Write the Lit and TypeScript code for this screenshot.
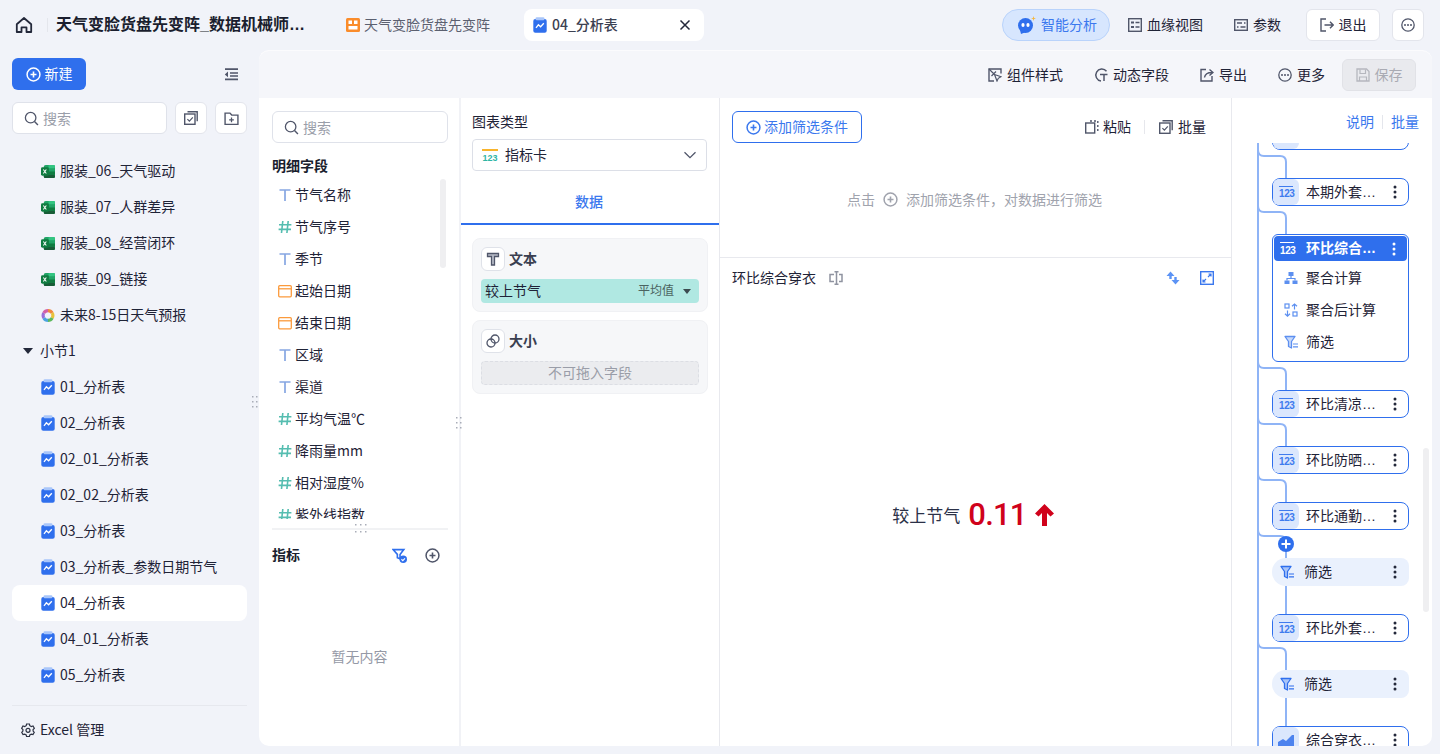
import { LitElement, html, svg, css } from "lit";
import { customElement } from "lit/decorators.js";

const S = (w: number, h: number, body: any, vb = "0 0 14 14") =>
  html`<svg class="ic" width=${w} height=${h} viewBox=${vb} fill="none">${body}</svg>`;
const ink = "#50566a";
const blue = "#2f6fed";

const excel = () => S(14, 15, svg`
  <rect x="3" y="0.5" width="12" height="14" rx="2" fill="#21a366"/>
  <rect x="8" y="7.500" width="7" height="3.500" fill="#107c41"/><rect x="3" y="11" width="12" height="3.500" rx="1.500" fill="#185c37"/>
  <rect x="8" y="0.5" width="7" height="3.500" rx="1" fill="#33c481"/>
  <rect x="0" y="3" width="8.500" height="9" rx="1.500" fill="#107c41"/>
  <path d="M2.500 5.300l3.200 4.400M5.700 5.300L2.500 9.700" stroke="#fff" stroke-width="1.100"/>`, "0 0 15 15");
const chart = () => S(14, 16, svg`
  <rect x="0.300" y="2" width="13.400" height="13.700" rx="2" fill="#2f6fed"/>
  <rect x="2.500" y="0.300" width="9" height="3" rx="1.300" fill="#a9c6fa"/>
  <path d="M3 10.800l2.400-3 2.200 2 3.200-3.600" stroke="#fff" stroke-width="1.300" fill="none"/>`, "0 0 14 16");
const logo = () => S(14, 15, svg`
  <g fill="none" stroke-width="3.400">
  <path d="M7.500 2.300a5.200 5.200 0 0 1 4.500 2.600" stroke="#f0883e"/>
  <path d="M12 4.900a5.200 5.200 0 0 1 0 5.200" stroke="#e8c23a"/>
  <path d="M12 10.100a5.200 5.200 0 0 1-4.500 2.600" stroke="#5cb85c"/>
  <path d="M7.500 12.700A5.200 5.200 0 0 1 3 10.100" stroke="#4aa3df"/>
  <path d="M3 10.100a5.200 5.200 0 0 1 0-5.200" stroke="#9a6fd8"/>
  <path d="M3 4.900a5.200 5.200 0 0 1 4.500-2.600" stroke="#d25fa8"/></g>`, "0 0 15 15");
const plusC = (c = ink, sz = 15) => S(sz, sz, svg`<circle cx="7" cy="7" r="6" stroke=${c} stroke-width="1.400"/><path d="M7 4.200v5.600M4.200 7h5.600" stroke=${c} stroke-width="1.500"/>`);
const searchI = () => S(15, 15, svg`<circle cx="6.200" cy="6.200" r="4.900" stroke=${ink} stroke-width="1.200"/><path d="M9.800 9.800l3.200 3.200" stroke=${ink} stroke-width="1.300"/>`);
const batch = () => S(14, 14, svg`<rect x="0.700" y="3" width="10.300" height="10.300" stroke=${ink} stroke-width="1.400"/><path d="M3.500 0.800h9.700v9.400" stroke=${ink} stroke-width="1.400"/><path d="M3.400 8.200l2 2 3.400-3.800" stroke=${ink} stroke-width="1.200"/>`);
const folderPlus = () => S(15, 15, svg`<path d="M1 2h4.600l1.600 1.800H13v8.700H1z" stroke=${ink} stroke-width="1.300"/><path d="M7 6v4.400M4.800 8.200h4.400" stroke=${ink} stroke-width="1.200"/>`);
const indent = () => S(14, 14, svg`<path d="M1 2.200h13M6 6h8M6 9h8M1 12.400h13" stroke=${ink} stroke-width="1.700"/><path d="M4 4.600L.8 7.400 4 10.200z" fill=${ink}/>`);
const gear = () => S(14, 14, svg`<path d="M5.600 1h2.800l.4 1.700 1.500.8 1.700-.5 1.300 2.300-1.200 1.200v1.600l1.200 1.200-1.300 2.300-1.700-.5-1.500.8-.4 1.700H5.600l-.4-1.700-1.500-.8-1.700.5L.7 9.300l1.200-1.200V6.500L.7 5.300 2 3l1.700.5 1.500-.8z" stroke="#2d3243" stroke-width="1.200"/><circle cx="7" cy="7.300" r="2" stroke="#2d3243" stroke-width="1.200"/>`);
const T = () => S(14, 14, svg`<path d="M1.500 2h11M7 2v11" stroke="#86a6e2" stroke-width="1.700"/>`);
const H = () => S(14, 14, svg`<path d="M4.800 1l-1.300 12M10.200 1L8.900 13M1 4.800h12.400M.6 9.400H13" stroke="#55bdb0" stroke-width="1.600"/>`);
const Cal = () => S(14, 14, svg`<rect x="0.700" y="1.700" width="12.600" height="11.100" rx="1" stroke="#fb9a3c" stroke-width="1.300"/><path d="M1 4.800h12" stroke="#fb9a3c" stroke-width="1.300"/>`);
const n123 = (light = false) => html`<span class="n123 ${light ? "lt" : ""}"><i></i>123</span>`;
const menu = (c = "#23283a") => html`<svg class="dots" width="4" height="14" viewBox="0 0 4 14"><circle cx="2" cy="2" r="1.500" fill=${c}/><circle cx="2" cy="7" r="1.500" fill=${c}/><circle cx="2" cy="12" r="1.500" fill=${c}/></svg>`;
const filterI = (c = blue) => S(14, 14, svg`<path d="M1 1.500h10L7.500 6.500V13L4.500 11.500V6.500z" stroke=${c} stroke-width="1.300" stroke-linejoin="round" fill=${c} fill-opacity=".35"/><path d="M9 9h5M9 11.800h5" stroke=${c} stroke-width="1.200"/>`);
const grip = () => html`<svg width="6" height="14" viewBox="0 0 6 14"><g fill="#a9adb8"><rect x="0" y="1" width="1.500" height="1.500"/><rect x="0" y="6" width="1.500" height="1.500"/><rect x="0" y="11" width="1.500" height="1.500"/><rect x="4" y="1" width="1.500" height="1.500"/><rect x="4" y="6" width="1.500" height="1.500"/><rect x="4" y="11" width="1.500" height="1.500"/></g></svg>`;
const gripH = () => html`<svg width="14" height="9" viewBox="0 0 14 9"><g fill="#a9adb8"><rect x="1" y="0" width="1.500" height="1.500"/><rect x="6" y="0" width="1.500" height="1.500"/><rect x="11" y="0" width="1.500" height="1.500"/><rect x="1" y="7" width="1.500" height="1.500"/><rect x="6" y="7" width="1.500" height="1.500"/><rect x="11" y="7" width="1.500" height="1.500"/></g></svg>`;
const branch = () => html`<svg class="br" width="32" height="28" viewBox="0 0 32 28" fill="none"><path d="M1 0Q1 6 7 6H23Q29 6 29 12V28" stroke="#8fb4f6" stroke-width="2"/></svg>`;
const more = () => S(14, 14, svg`<circle cx="7" cy="7" r="6.200" stroke="#50566a" stroke-width="1.300"/><circle cx="4" cy="7" r="1" fill="#50566a"/><circle cx="7" cy="7" r="1" fill="#50566a"/><circle cx="10" cy="7" r="1" fill="#50566a"/>`);

const tree: any[] = [
  ["x", "服装_05_"], ["x", "服装_06_天气驱动"], ["x", "服装_07_人群差异"], ["x", "服装_08_经营闭环"], ["x", "服装_09_链接"],
  ["l", "未来8-15日天气预报"], ["s", "小节1"], ["c", "01_分析表"], ["c", "02_分析表"], ["c", "02_01_分析表"], ["c", "02_02_分析表"],
  ["c", "03_分析表"], ["c", "03_分析表_参数日期节气"], ["a", "04_分析表"], ["c", "04_01_分析表"], ["c", "05_分析表"],
];
const fields: any[] = [
  [T, "节气名称"], [H, "节气序号"], [T, "季节"], [Cal, "起始日期"], [Cal, "结束日期"], [T, "区域"], [T, "渠道"],
  [H, "平均气温℃"], [H, "降雨量mm"], [H, "相对湿度%"], [H, "紫外线指数"],
];

@customElement("app-root")
export class AppRoot extends LitElement {
  static styles = css`
    :host { display: block; width: 1440px; height: 754px; overflow: hidden; background: #f1f3f9; color: #1f2337;
      font: 14px/20px "Noto Sans CJK SC", "Liberation Sans", sans-serif; }
    .ic { flex: none; display: block; margin-top: 2px; }
    .tab1, .tab2, .ai, .tl, .btn, .new, .row, .foot, .f, .sel, .tabs, .pill, .off, .add, .ch, .or, .oh, .mh { padding-bottom: 2px; box-sizing: border-box; }
    .home .ic, .sr > .ic, .sq .ic, .box .ic, .wb .ic, .plus .ic, .search .ic, .nd > .ic, .kpi .ic { margin-top: 0; }
    .top { height: 50px; display: flex; align-items: center; padding: 0 16px 0 15px; box-sizing: border-box; }
    .home { margin-right: 14px; display: block; }
    .vsep { width: 1px; height: 14px; background: #e4e6ec; margin-right: 8px; }
    .title { width: 251px; font: 700 16px/20px "Liberation Sans", "Noto Sans CJK SC", sans-serif; white-space: nowrap; overflow: hidden; text-overflow: ellipsis; color: #1a1e2e; }
    .tab1 { margin-left: 39px; display: flex; align-items: center; gap: 4px; color: #5b6070; }
    .tab2 { margin-left: 34px; width: 180px; height: 32px; background: #fff; border-radius: 8px; display: flex; align-items: center; gap: 5px; padding: 0 13px 2px 9px; color: #3c4152; font-weight: 500; }
    .tab2 .x { margin-left: auto; }
    .grow { flex: 1; }
    .ai { width: 108px; height: 32px; border: 1px solid #b9d3fb; background: #d7e6fe; border-radius: 16px; display: flex; align-items: center; gap: 5px; padding-left: 14px; color: #3b78ee; }
    .tl { display: flex; align-items: center; gap: 5px; }
    .tl.a { margin-left: 18px; }
    .tl.b { margin-left: 31px; }
    .btn { height: 32px; background: #fff; border: 1px solid #e3e5ec; border-radius: 6px; display: flex; align-items: center; justify-content: center; gap: 5px; }
    .exit { width: 74px; margin-left: 25px; }
    .mo { width: 32px; margin-left: 12px; }

    .body { display: flex; height: 696px; }
    .side { width: 259px; flex: none; box-sizing: border-box; padding: 8px 12px 0; display: flex; flex-direction: column; }
    .sr { display: flex; align-items: center; justify-content: space-between; padding-right: 9px; }
    .new { width: 74px; height: 32px; background: #2f6fed; border-radius: 6px; color: #fff; display: flex; align-items: center; justify-content: center; gap: 4px; }
    .srow { display: flex; gap: 8px; margin-top: 12px; }
    .search { height: 32px; box-sizing: border-box; flex: 1; border: 1px solid #dfe2ea; border-radius: 6px; background: #fff; display: flex; align-items: center; gap: 4px; padding-left: 11px; color: #9a9ea9; }
    .sq { width: 32px; height: 32px; box-sizing: border-box; border: 1px solid #e3e5ec; background: #fff; border-radius: 6px; display: flex; align-items: center; justify-content: center; flex: none; }
    .tree { height: 551px; margin-top: 8px; overflow: hidden; }
    .row { height: 36px; display: flex; align-items: center; gap: 5px; padding-left: 29px; border-radius: 8px; white-space: nowrap; color: #1f2337; }
    .row:first-child { margin-top: -25px; }
    .row.sec { padding-left: 11px; gap: 7px; }
    .row.on { background: #fff; }
    .tri { width: 0; height: 0; margin-top: 2px; border: 5px solid transparent; border-top: 6px solid #23283a; border-bottom: 0; }
    .foot { margin-top: 12px; border-top: 1px solid #e6e8ee; padding: 13px 0 2px 9px; display: flex; align-items: center; gap: 5px; }
    .vgrip { position: absolute; left: 252px; top: 343px; }
    .side-wrap { position: relative; display: flex; }

    .card { width: 1173px; height: 696px; flex: none; background: #fff; border-top: 1px solid #fbfbfd; border-radius: 10px; overflow: hidden; box-sizing: border-box; display: flex; flex-direction: column; }
    .bar { height: 47px; flex: none; box-sizing: border-box; padding: 1px 16px 0 0; background: #f5f6fa; display: flex; align-items: center; justify-content: flex-end; gap: 31px; }
    .save { width: 74px; margin-left: -14px; background: #e9eaee; border-color: #e1e2e7; color: #a9abb3; }
    .panels { flex: 1; display: flex; min-height: 0; }
    .fields { width: 202px; flex: none; box-sizing: border-box; border-right: 2px solid #f1f2f6; padding: 13px 11px 0 13px; position: relative; display: flex; flex-direction: column; }
    .fields .search { flex: none; }
    .h { font-weight: 700; color: #1a1e2e; }
    .mf { margin-top: 12px; height: 20px; margin-bottom: 1px; }
    .flist { height: 340px; margin-top: 3px; overflow: hidden; margin-left: -13px; }
    .f { height: 32px; display: flex; align-items: center; gap: 3px; padding-left: 19px; white-space: nowrap; }
    .thumb { position: absolute; width: 6px; border-radius: 3px; background: #efeff1; }
    .t1 { left: 181px; top: 81px; height: 89px; }
    .hr { height: 2px; background: #f1f2f4; margin-top: 9px; flex: none; }
    .hg { position: absolute; left: 95px; top: 426px; line-height: 0; }
    .mh { display: flex; align-items: center; margin-top: 14px; }
    .mh .h { flex: 1; }
    .mh .m { margin-right: 18px; }
    .mh .p { margin-right: 8px; }
    .none { text-align: center; margin-top: 80px; color: #9599a6; margin-right: 1px; }
    .fgrip { position: absolute; left: 197px; top: 316px; }

    .cfg { width: 259px; flex: none; box-sizing: border-box; border-right: 1px solid #e8e9ee; display: flex; flex-direction: column; }
    .cl { margin: 13px 0 1px 11px; }
    .sel { margin: 7px 12px 0 11px; height: 32px; border: 1px solid #dcdfe7; border-radius: 4px; display: flex; align-items: center; padding: 0 9px 2px 9px; gap: 7px; }
    .sel .c { margin-left: auto; }
    .tabs { height: 54px; flex: none; padding: 7px 2px 0 0; border-bottom: 2px solid #2f6fed; display: flex; align-items: center; justify-content: center; color: #3b78ee; font-weight: 500; }
    .well { margin: 13px 11px 0; height: 74px; box-sizing: border-box; background: #f6f7f9; border: 1px solid #f0f1f4; border-radius: 8px; padding: 8px; }
    .well + .well { margin-top: 8px; }
    .wh { display: flex; align-items: center; gap: 4px; font-weight: 700; color: #3a3f50; }
    .wt { padding-bottom: 2px; }
    .wb { width: 24px; height: 24px; box-sizing: border-box; border: 1px solid #dfe2e9; background: #fff; border-radius: 6px; display: flex; align-items: center; justify-content: center; }
    .pill { margin-top: 8px; height: 24px; border-radius: 4px; background: #b0e8e2; display: flex; align-items: center; padding: 0 8px 2px 4px; }
    .pill .v { margin-left: auto; color: #4b6360; font-size: 12px; }
    .pill .d { margin-left: 9px; margin-top: 2px; width: 0; height: 0; border: 4px solid transparent; border-top: 5px solid #3c4a50; border-bottom: 0; }
    .off { margin-top: 8px; height: 24px; border: 1px dashed #dcdee4; border-radius: 4px; background: #ebecef; color: #9a9da8; display: flex; align-items: center; justify-content: center; }

    .main { width: 512px; flex: none; box-sizing: border-box; border-right: 1px solid #e8e9ee; display: flex; flex-direction: column; }
    .fa { height: 160px; flex: none; box-sizing: border-box; border-bottom: 1px solid #e8e9ee; padding: 13px 12px 0; display: flex; flex-direction: column; }
    .far { display: flex; align-items: center; }
    .add { width: 130px; height: 32px; border: 1px solid #2f6fed; border-radius: 6px; display: flex; align-items: center; justify-content: center; gap: 3px; color: #3b78ee; }
    .far .sp { flex: 1; }
    .far .vs { width: 1px; height: 14px; background: #e6e7ec; margin: 0 14px 0 13px; }
    .far .tl { gap: 4px; }
    .far .tl.last { margin-right: 13px; gap: 5px; }
    .hint { margin-top: 46px; display: flex; justify-content: center; align-items: center; gap: 8px; color: #a0a3ad; padding-right: 2px; }
    .hint .ic { margin-top: 0; }
    .ch { height: 40px; flex: none; display: flex; align-items: center; padding: 0 17px 2px 12px; }
    .ch .sw { margin-left: 13px; }
    .ch .end { margin-left: auto; display: flex; align-items: center; gap: 20px; }
    .kpi { flex: 1; display: flex; align-items: center; justify-content: center; gap: 8px; padding-right: 5px; padding-bottom: 15px; box-sizing: border-box; font-size: 17px; color: #2b3148; }
    .kv { font: 500 31px/36px Roboto, "Liberation Sans", sans-serif; letter-spacing: -.8px; color: #d0021b; }

    .rp { flex: 1; min-width: 0; position: relative; display: flex; flex-direction: column; }
    .rh { height: 45px; flex: none; box-sizing: border-box; padding: 13px 13px 0 0; display: flex; justify-content: flex-end; color: #3b78ee; align-items: flex-start; }
    .rh .vs { width: 1px; height: 14px; background: #e4e6ec; margin: 4px 8px 0; }
    .flow { flex: 1; overflow: hidden; position: relative; padding-left: 40px; }
    .vline { position: absolute; left: 25px; top: 0; bottom: 0; width: 2px; background: #8fb4f6; }
    .nd { width: 137px; height: 28px; box-sizing: border-box; border: 1px solid #2f6fed; border-radius: 8px; display: flex; align-items: center; background: #fff; position: relative; white-space: nowrap; }
    .nd.first { margin-top: -21px; }
    .box { width: 26px; height: 26px; border-radius: 6px; background: #dbe7fd; display: flex; align-items: center; justify-content: center; flex: none; }
    .nt { margin-left: 7px; width: 72px; overflow: hidden; text-overflow: ellipsis; font-family: "Liberation Sans", "Noto Sans CJK SC", sans-serif; }
    .dots { flex: none; display: block; }
    .nd .dots { margin-left: auto; margin-right: 11px; }
    .n123 { display: block; color: #3f7bee; font: 700 10px/9px "Liberation Sans", sans-serif; letter-spacing: -.4px; text-align: center; width: 14px; }
    .n123 i { display: block; border-top: 1.500px solid #3f7bee; margin: 0 0 2.500px; }
    .n123.lt { color: #fff; }
    .n123.lt i { border-color: #fff; }
    .open { height: 128px; display: block; padding: 1px; border-radius: 6px; }
    .oh { height: 25px; border-radius: 4px; background: #2f6fed; color: #fff; font-weight: 700; display: flex; align-items: center; }
    .oh .box { background: transparent; height: 25px; margin-top: 2px; }
    .oh .nt { margin-left: 6px; }
    .oh .dots { margin-top: 2px; }
    .or { height: 32px; display: flex; align-items: center; gap: 8px; padding-left: 10px; }
    .or.f1 { margin-top: 1px; }
    .fl { border: 0; border-radius: 14px 8px 8px 14px; background: #eaf1fd; }
    .fl .ic { margin-left: 8px; }
    .fl .nt { margin-left: 10px; }
    .fl .dots { margin-right: 12px; }
    .gap { height: 28px; position: relative; }
    .br { position: absolute; left: -15px; top: 0; display: block; }
    .st { position: absolute; left: 13px; top: 0; bottom: 0; width: 2px; background: #8fb4f6; }
    .plus { position: absolute; left: 6px; top: 6px; width: 16px; height: 16px; border-radius: 50%; background: #2f6fed; display: flex; align-items: center; justify-content: center; }
    .t2 { right: 3px; top: 350px; height: 164px; }
  `;

  private node(name: string, icon?: any, cls = "") {
    return html`<div class="nd ${cls}"><div class="box">${icon ?? n123()}</div><span class="nt">${name}</span>${menu()}</div>`;
  }
  private fnode() {
    return html`<div class="nd fl">${filterI()}<span class="nt">筛选</span>${menu()}</div>`;
  }

  render() {
    return html`
      <div class="top">
        <span class="home">${S(18, 18, svg`<path d="M1.800 8.200L9 2l7.200 6.200V16h-4.700v-4.600h-5V16H1.800z" stroke="#23283a" stroke-width="1.800" stroke-linejoin="round"/>`, "0 0 18 18")}</span>
        <span class="vsep"></span>
        <span class="title">天气变脸货盘先变阵_数据机械师_服装行业分析</span>
        <span class="tab1">${S(14, 14, svg`<rect width="14" height="14" rx="1.500" fill="#fa8c2b"/><rect x="2.500" y="2.500" width="3.500" height="3.500" fill="#fff"/><rect x="8" y="2.500" width="3.500" height="3.500" fill="#fff"/><rect x="2.500" y="8" width="9" height="3.500" fill="#fff"/>`)}天气变脸货盘先变阵</span>
        <span class="tab2">${chart()}04_分析表<span class="x">${S(12, 12, svg`<path d="M1.500 1.500l9 9M10.500 1.500l-9 9" stroke="#23283a" stroke-width="1.500"/>`, "0 0 12 12")}</span></span>
        <span class="grow"></span>
        <span class="ai">${S(19, 18, svg`<circle cx="8.500" cy="9.500" r="7.500" fill="#2f6fed"/><path d="M3 14l1 4 5-2z" fill="#2f6fed"/><ellipse cx="6" cy="9" rx="1.600" ry="2" fill="#fff"/><ellipse cx="11" cy="9" rx="1.600" ry="2" fill="#fff"/><path d="M16.500 0l.6 1.900L19 2.500l-1.900.6-.6 1.900-.6-1.900-1.900-.6 1.900-.6z" fill="#f6b73c"/>`, "0 0 19 18")}智能分析</span>
        <span class="tl a">${S(14, 14, svg`<rect x=".7" y=".7" width="12.600" height="12.600" stroke="#50566a" stroke-width="1.400"/><rect x="3" y="3.500" width="3" height="2" fill="#50566a"/><rect x="3" y="8" width="3" height="2" fill="#50566a"/><path d="M7.500 4.500h4M7.500 9h4" stroke="#50566a" stroke-width="1.400"/>`)}血缘视图</span>
        <span class="tl b">${S(14, 14, svg`<rect x=".7" y="1.700" width="12.600" height="10.600" stroke="#50566a" stroke-width="1.400"/><path d="M3 5h5M10 5h1.500M3 9h1.500M6.500 9h5" stroke="#50566a" stroke-width="1.400"/>`)}参数</span>
        <span class="btn exit">${S(14, 14, svg`<path d="M6 1H1v12h5" stroke="#50566a" stroke-width="1.400"/><path d="M4.500 7h8.500M10 3.800L13.200 7 10 10.200" stroke="#50566a" stroke-width="1.400"/>`)}退出</span>
        <span class="btn mo">${more()}</span>
      </div>
      <div class="body">
        <div class="side-wrap">
        <div class="side">
          <div class="sr"><span class="new">${plusC("#fff", 15)}新建</span>${indent()}</div>
          <div class="srow"><div class="search">${searchI()}搜索</div><span class="sq">${batch()}</span><span class="sq">${folderPlus()}</span></div>
          <div class="tree">
            ${tree.map(([k, t]) => k === "s"
              ? html`<div class="row sec"><span class="tri"></span>${t}</div>`
              : html`<div class="row ${k === "a" ? "on" : ""}">${k === "x" ? excel() : k === "l" ? logo() : chart()}${t}</div>`)}
          </div>
          <div class="foot">${gear()}Excel 管理</div>
        </div>
        <span class="vgrip">${grip()}</span>
        </div>
        <div class="card">
          <div class="bar">
            <span class="tl">${S(14, 14, svg`<path d="M13 5.500V1H1v12h5" stroke="#50566a" stroke-width="1.400"/><path d="M1 1l5.500 5.500M3.500 8L8 3.500" stroke="#50566a" stroke-width="1.200"/><path d="M6.500 6.500l6.500 2.200-2.700 1.600L9 13z" stroke="#50566a" stroke-width="1.200"/>`)}组件样式</span>
            <span class="tl">${S(14, 14, svg`<path d="M12.500 3.300A6 6 0 1 0 7 13" stroke="#50566a" stroke-width="1.500"/><path d="M6 6.500h7.500M10 6.500V13" stroke="#50566a" stroke-width="1.500"/>`)}动态字段</span>
            <span class="tl">${S(14, 14, svg`<path d="M6 1.500H1v11.500h11V8" stroke="#50566a" stroke-width="1.400"/><path d="M4.500 9.500C5 6 7.500 4.500 12 4.500M9.500 1.500l3.500 3-3.500 3" stroke="#50566a" stroke-width="1.400"/>`)}导出</span>
            <span class="tl">${more()}更多</span>
            <span class="btn save">${S(14, 14, svg`<path d="M1 1h9.500L13 3.500V13H1z" stroke="#b5b7be" stroke-width="1.300"/><path d="M4 1.500v4h5.500v-4M3.500 13V9h7v4" stroke="#b5b7be" stroke-width="1.200"/>`)}保存</span>
          </div>
          <div class="panels">
            <div class="fields">
              <div class="search">${searchI()}搜索</div>
              <div class="h mf">明细字段</div>
              <div class="flist">${fields.map(([I, t]) => html`<div class="f">${I()}${t}</div>`)}</div>
              <div class="hr"></div>
              <div class="mh"><span class="h">指标</span><span class="m">${S(15, 15, svg`<path d="M1 1.500h10L7.500 6v4L5 9V6z" stroke="#2f6fed" stroke-width="1.500"/><circle cx="10.500" cy="10.500" r="3.500" fill="#2f6fed"/><path d="M8.800 10.500l1.300 1.300 2-2.200" stroke="#fff" stroke-width="1"/>`)}</span><span class="p">${plusC("#50566a", 15)}</span></div>
              <div class="none">暂无内容</div>
              <span class="thumb t1"></span>
              <span class="hg">${gripH()}</span>
              <span class="fgrip">${grip()}</span>
            </div>
            <div class="cfg">
              <div class="cl">图表类型</div>
              <div class="sel">${S(16, 13, svg`<rect x="0" y="0" width="16" height="2" fill="#f8b42c"/><text x="8" y="12" text-anchor="middle" font-family="Liberation Sans" font-weight="700" font-size="9" fill="#2fb5a5">123</text>`, "0 0 16 13")}指标卡<span class="c">${S(14, 14, svg`<path d="M1.500 4.200L7 9.700l5.500-5.500" stroke="#50566a" stroke-width="1.300"/>`)}</span></div>
              <div class="tabs">数据</div>
              <div class="well">
                <div class="wh"><span class="wb">${S(14, 14, svg`<path d="M1.500 1.500h11v3h-4V13h-3V4.500h-4z" stroke="#50566a" stroke-width="1.300" fill="#b8bcc8"/>`)}</span><span class="wt">文本</span></div>
                <div class="pill">较上节气<span class="v">平均值</span><span class="d"></span></div>
              </div>
              <div class="well">
                <div class="wh"><span class="wb">${S(14, 14, svg`<circle cx="5" cy="9" r="4" stroke="#50566a" stroke-width="1.300"/><circle cx="9" cy="5" r="4" stroke="#50566a" stroke-width="1.300"/>`)}</span><span class="wt">大小</span></div>
                <div class="off">不可拖入字段</div>
              </div>
            </div>
            <div class="main">
              <div class="fa">
                <div class="far">
                  <span class="add">${plusC("#3b78ee", 15)}添加筛选条件</span>
                  <span class="sp"></span>
                  <span class="tl">${S(14, 14, svg`<rect x=".7" y="3" width="9" height="10" stroke="#50566a" stroke-width="1.400"/><path d="M5 1h2M9 1h2M12.800 1v2M12.800 5v2M12.800 9v2" stroke="#50566a" stroke-width="1.400"/>`)}粘贴</span>
                  <span class="vs"></span>
                  <span class="tl last">${batch()}批量</span>
                </div>
                <div class="hint">点击 ${plusC("#a0a3ad", 15)} 添加筛选条件，对数据进行筛选</div>
              </div>
              <div class="ch">环比综合穿衣
                <span class="sw">${S(14, 14, svg`<path d="M5 3.500H1v7h4M10 3.500h3v7h-3" stroke="#8f93a0" stroke-width="1.500"/><path d="M7.500 .5v13M5.500 .8h4M5.500 13.200h4" stroke="#8f93a0" stroke-width="1.500"/>`)}</span>
                <span class="end">
                  ${S(14, 14, svg`<path d="M4.500 .5L8.500 5H.5zM9.500 13.500L5.500 9h8z" fill="#5c93f5"/><path d="M4.500 4v4M9.500 6v4" stroke="#5c93f5" stroke-width="2.400"/>`)}
                  ${S(14, 14, svg`<rect x=".7" y=".7" width="12.600" height="12.600" stroke="#3b78ee" stroke-width="1.400"/><path d="M8 6l3-3M8.500 3H11v2.500M6 8l-3 3M3 8.500V11h2.500" stroke="#3b78ee" stroke-width="1.200"/>`)}
                </span>
              </div>
              <div class="kpi"><span>较上节气</span><span class="kv">0.11</span>${S(19, 22, svg`<path d="M9.500 0L19 9.500 15.500 12.500 12 9V22H7V9L3.500 12.500 0 9.500z" fill="#d0021b"/>`, "0 0 19 22")}</div>
            </div>
            <div class="rp">
              <div class="rh">说明<span class="vs"></span>批量</div>
              <div class="flow">
                <span class="vline"></span>
                ${this.node("环比综合穿衣", undefined, "first")}
                <div class="gap">${branch()}</div>
                ${this.node("本期外套穿衣")}
                <div class="gap">${branch()}</div>
                <div class="nd open">
                  <div class="oh"><div class="box">${n123(true)}</div><span class="nt">环比综合穿衣</span>${menu("#fff")}</div>
                  <div class="or f1">${S(14, 14, svg`<rect x="4.500" y="1" width="5" height="4" fill="#5c8ff0"/><rect x=".5" y="9.500" width="5" height="3.500" fill="#5c8ff0"/><rect x="8.500" y="9.500" width="5" height="3.500" fill="#5c8ff0"/><path d="M7 5v2.500M3 9.500v-2h8v2" stroke="#5c8ff0" stroke-width="1.200"/>`)}聚合计算</div>
                  <div class="or">${S(14, 14, svg`<path d="M3.500 7.500V13M1 10.800L3.500 13.200 6 10.800M10.500 6.500V1M8 3.300L10.500 1 13 3.300" stroke="#5c8ff0" stroke-width="1.200"/><rect x="1" y="1" width="4" height="4" stroke="#5c8ff0" stroke-width="1.200"/><rect x="9" y="9" width="4" height="4" stroke="#5c8ff0" stroke-width="1.200"/>`)}聚合后计算</div>
                  <div class="or">${filterI("#5c8ff0")}筛选</div>
                </div>
                <div class="gap">${branch()}</div>
                ${this.node("环比清凉穿衣")}
                <div class="gap">${branch()}</div>
                ${this.node("环比防晒穿衣")}
                <div class="gap">${branch()}</div>
                ${this.node("环比通勤穿衣")}
                <div class="gap">${branch()}<span class="plus">${S(10, 10, svg`<path d="M5 .5v9M.5 5h9" stroke="#fff" stroke-width="2"/>`, "0 0 10 10")}</span></div>
                ${this.fnode()}
                <div class="gap"><span class="st"></span></div>
                ${this.node("环比外套穿衣")}
                <div class="gap">${branch()}</div>
                ${this.fnode()}
                <div class="gap"><span class="st"></span></div>
                ${this.node("综合穿衣指数", S(16, 12, svg`<path d="M0 12V8l5-3 3 2 6-6 2 0v11z" fill="#4d83ee"/>`, "0 0 16 12"))}
              </div>
              <span class="thumb t2"></span>
            </div>
          </div>
        </div>
      </div>
    `;
  }
}
